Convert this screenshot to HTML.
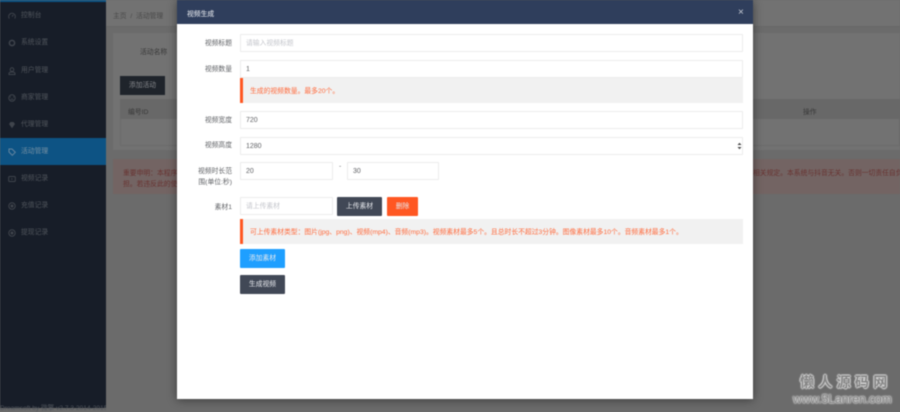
<!DOCTYPE html>
<html><head><meta charset="utf-8"><style>
*{box-sizing:border-box}
html,body{margin:0;padding:0}
body{width:900px;height:408px;overflow:hidden;position:relative;background:#6b6b6b;font-family:"Liberation Sans","Noto Sans CJK SC",sans-serif;font-size:6.8px;color:#606266}
#wrap{position:absolute;inset:0;filter:blur(.5px)}
.a{position:absolute;white-space:nowrap}
#side{left:0;top:0;width:106px;height:408px;background:#171d28}
.it{left:0;width:106px;height:27px;line-height:28px;color:#50555c;padding-left:21px;font-size:6.8px}
.it svg{position:absolute;left:8px;top:10px}
.inp{background:#fff;border:1px solid #ececec;border-radius:1px;height:18px;line-height:18px;padding-left:5px;color:#606266;font-size:7px}
.ph{color:#c4c6cc;font-size:6.8px}
.lab{text-align:right;width:55px;left:177px;color:#606266;font-size:6.8px;white-space:nowrap;line-height:11px}
.btn{height:19px;line-height:20px;text-align:center;color:#e8eaee;font-size:6.8px;border-radius:1px}
.tip{left:240px;width:503px;height:25px;line-height:27px;background:#f1f1f1;border-left:3px solid #ff5722;color:#ff6a3c;padding-left:7px;font-size:6.8px}
</style></head><body><div id="wrap">
<div class="a" style="left:106px;top:0;width:794px;height:27px;background:#727272;border-bottom:1px solid #686868"></div>
<div class="a" style="left:113px;top:10px;color:#4a4a4a">主页 &nbsp;/&nbsp; 活动管理</div>
<div class="a" style="left:113px;top:33px;width:787px;height:117px;background:#727272"></div>
<div class="a" style="left:140px;top:46px;color:#383838">活动名称</div>
<div class="a" style="left:120px;top:76px;width:45px;height:19px;line-height:20px;text-align:center;background:#1f242b;color:#85878b">添加活动</div>
<div class="a" style="left:120px;top:99px;width:780px;height:20px;background:#686868"></div>
<div class="a" style="left:128px;top:106px;color:#383838">编号ID</div>
<div class="a" style="left:803px;top:106px;color:#383838">操作</div>
<div class="a" style="left:120px;top:119px;width:780px;height:27px;border:1px solid #6b6b6b;border-top:0"></div>
<div class="a" style="left:113px;top:159px;width:787px;height:35px;background:#736463"></div>
<div class="a" style="left:123px;top:167px;color:#683230">重要申明：本程序</div>
<div class="a" style="left:123px;top:178px;color:#683230">担。若违反此的使</div>
<div class="a" style="left:753px;top:167px;width:147px;overflow:hidden;color:#683230">相关规定。本系统与抖音无关。否则一切责任自负</div>

<div class="a" id="side"></div>
<div class="a" style="left:0;top:0;width:106px;height:2px;background:#0d5384"></div>
<div class="a it" style="top:2px">控制台<svg width="8" height="8" viewBox="0 0 8 8"><path d="M1.3 6.5A3.3 3.3 0 1 1 6.7 6.5M4 4.5L5.3 3" fill="none" stroke="#3f444c"/></svg></div>
<div class="a it" style="top:29px">系统设置<svg width="8" height="8" viewBox="0 0 8 8"><circle cx="4" cy="4" r="2.6" fill="none" stroke="#3f444c" stroke-width="1.5"/></svg></div>
<div class="a it" style="top:57px">用户管理<svg width="8" height="8" viewBox="0 0 8 8"><circle cx="4" cy="2.6" r="1.8" fill="none" stroke="#3f444c"/><path d="M1 7.5V6.5Q1 5 4 5T7 6.5V7.5Z" fill="none" stroke="#3f444c"/></svg></div>
<div class="a it" style="top:84px">商家管理<svg width="8" height="8" viewBox="0 0 8 8"><circle cx="4" cy="4" r="3.2" fill="none" stroke="#3f444c"/><path d="M2 3H3M5 3H6M2.5 5.3H5.5" stroke="#3f444c" fill="none"/></svg></div>
<div class="a it" style="top:111px">代理管理<svg width="8" height="8" viewBox="0 0 8 8"><path d="M1 3L2.5 1H5.5L7 3L4 7.2Z" fill="#3f444c"/></svg></div>
<div class="a it" style="top:138px;background:#0d5384;color:#7590a3">活动管理<svg width="8" height="8" viewBox="0 0 8 8"><path d="M1 1H4L7.3 4.3L4.3 7.3L1 4Z" fill="none" stroke="#6485a0"/></svg></div>
<div class="a it" style="top:165px">视频记录<svg width="8" height="8" viewBox="0 0 8 8"><rect x=".7" y="1.5" width="6.6" height="5" rx="1" fill="none" stroke="#3f444c"/><path d="M3.3 3L5 4L3.3 5Z" fill="#3f444c"/></svg></div>
<div class="a it" style="top:192px">充值记录<svg width="8" height="8" viewBox="0 0 8 8"><circle cx="4" cy="4" r="3.2" fill="none" stroke="#3f444c"/><circle cx="4" cy="4" r="1.5" fill="#3f444c"/></svg></div>
<div class="a it" style="top:219px">提现记录<svg width="8" height="8" viewBox="0 0 8 8"><circle cx="4" cy="4" r="3.2" fill="none" stroke="#3f444c"/><circle cx="4" cy="4" r="1.5" fill="#3f444c"/></svg></div>
<div class="a" style="left:0;top:402px;width:106px;overflow:hidden;color:#50555c;font-size:6.6px">Dreamsoft by 微擎 v2.7.3 2014-2015</div>

<div class="a" style="left:177px;top:0;width:576px;height:399px;background:#fff;box-shadow:0 1px 9px rgba(0,0,0,.45)"></div>
<div class="a" style="left:177px;top:0;width:576px;height:24px;background:#2f3e5c"></div>
<div class="a" style="left:187px;top:8px;color:#d5d9e0;font-weight:500">视频生成</div>
<div class="a" style="left:738px;top:7px;color:#c6cbd4;font-size:10px">×</div>

<div class="a lab" style="top:38px">视频标题</div>
<div class="a inp ph" style="left:240px;top:34px;width:503px">请输入视频标题</div>
<div class="a lab" style="top:64px">视频数量</div>
<div class="a inp" style="left:240px;top:60px;width:503px">1</div>
<div class="a tip" style="top:78px">生成的视频数量。最多20个。</div>
<div class="a lab" style="top:115px">视频宽度</div>
<div class="a inp" style="left:240px;top:111px;width:503px">720</div>
<div class="a lab" style="top:140px">视频高度</div>
<div class="a inp" style="left:240px;top:137px;width:503px">1280</div>
<svg class="a" style="left:737px;top:142px" width="5" height="8" viewBox="0 0 5 8"><path d="M.5 3L2.5 .8L4.5 3ZM.5 5L2.5 7.2L4.5 5Z" fill="#444"/></svg>
<div class="a lab" style="top:166px">视频时长范<br>围(单位:秒)</div>
<div class="a inp" style="left:240px;top:162px;width:93px">20</div>
<div class="a" style="left:339px;top:163px;color:#606266">-</div>
<div class="a inp" style="left:347px;top:162px;width:92px">30</div>
<div class="a lab" style="top:202px">素材1</div>
<div class="a inp ph" style="left:240px;top:197px;width:93px">请上传素材</div>
<div class="a btn" style="left:337px;top:197px;width:45px;background:#414856">上传素材</div>
<div class="a btn" style="left:387px;top:197px;width:31px;background:#ff5722">删除</div>
<div class="a tip" style="top:219px">可上传素材类型：图片(jpg、png)、视频(mp4)、音频(mp3)。视频素材最多5个。且总时长不超过3分钟。图像素材最多10个。音频素材最多1个。</div>
<div class="a btn" style="left:240px;top:249px;width:45px;background:#1e9fff">添加素材</div>
<div class="a btn" style="left:240px;top:275px;width:45px;background:#414856">生成视频</div>

<div class="a" style="left:800px;top:372px;color:#858585;font-size:14px;font-weight:bold;letter-spacing:4.3px;text-shadow:0 0 1px #d8d8d8,0 0 2px #d8d8d8,1px 0 1px #ccc,-1px 0 1px #ccc,0 1px 1px #ccc,0 -1px 1px #ccc">懒人源码网</div>
<div class="a" style="left:793px;top:392px;color:#808080;font-size:12px;text-shadow:0 0 1px #ddd,0 0 1px #ddd,0 0 2px #ddd,0 0 2px #ddd">www.5Lanren.com</div>
</div></body></html>
